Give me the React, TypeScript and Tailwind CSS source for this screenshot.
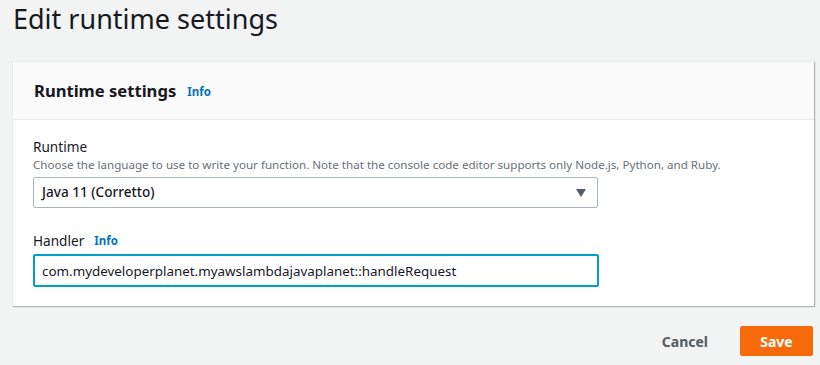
import { useState } from "react";

export default function App() {
  const [handler, setHandler] = useState(
    "com.mydeveloperplanet.myawslambdajavaplanet::handleRequest"
  );

  return (
    <div
      className="w-[820px] h-[365px] overflow-hidden bg-[#f2f3f3] text-[#16191f]"
      style={{ fontFamily: '"Noto Sans", "Open Sans", Arial, sans-serif' }}
    >
      <h1 className="pl-[13px] pt-[1px] text-[27px] leading-[36px] font-normal text-[#16191f]">
        Edit runtime settings
      </h1>

      {/* Card */}
      <div className="mt-[24px] ml-[12px] w-[802px] bg-white border-l border-t border-[#eaeded] shadow-[1px_1px_1px_0_rgba(0,28,36,0.3)]">
        <div className="h-[58px] bg-[#fafafa] border-b border-[#eaeded] flex items-center pl-[21px]">
          <h2 className="text-[16.6px] font-bold leading-[22px]">Runtime settings</h2>
          <a href="#" className="ml-[11px] mt-[3px] text-[11.5px] font-bold text-[#0073bb]">
            Info
          </a>
        </div>

        <div className="pl-[20px] pt-[17px] pb-[19px]">
          <div className="text-[13.6px] leading-[20px]">Runtime</div>
          <div className="text-[11.6px] leading-[16px] text-[#687078]">
            Choose the language to use to write your function. Note that the console code editor supports only Node.js, Python, and Ruby.
          </div>
          <div className="mt-[4px] w-[565px] h-[31px] border border-[#aab7b8] rounded-[2px] flex items-center justify-between pl-[8px] pr-[11px]">
            <span className="text-[13.6px] font-medium">Java 11 (Corretto)</span>
            <svg width="10" height="8" viewBox="0 0 10 8">
              <path d="M0 0h10L5 8z" fill="#545b64" />
            </svg>
          </div>

          <div className="mt-[23px] flex items-center">
            <span className="text-[13.6px] leading-[20px]">Handler</span>
            <a href="#" className="ml-[10px] text-[11.5px] font-bold text-[#0073bb]">
              Info
            </a>
          </div>
          <input
            value={handler}
            onChange={(e) => setHandler(e.target.value)}
            className="mt-[3px] block w-[566px] h-[33px] border-2 border-[#00a1c9] rounded-[2px] pl-[7px] text-[13.4px] text-[#16191f] outline-none"
          />
        </div>
      </div>

      <div className="mt-[20px] w-[813px] flex justify-end items-center">
        <button className="mr-[32px] text-[14px] font-bold text-[#545b64]">Cancel</button>
        <button className="w-[73px] h-[30px] rounded-[2px] bg-[#f76a0b] text-white text-[14px] font-bold">
          Save
        </button>
      </div>
    </div>
  );
}
